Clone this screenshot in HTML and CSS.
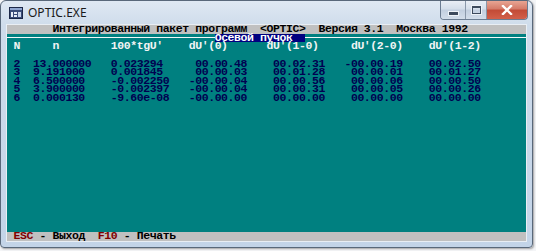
FILE: index.html
```html
<!DOCTYPE html>
<html lang="ru">
<head>
<meta charset="utf-8">
<title>OPTIC.EXE</title>
<link rel="stylesheet" href="styles.css">
</head>
<body>
<div class="win">
  <div class="titlebar">
    <svg class="icon" width="14" height="12" viewBox="0 0 14 12">
      <rect x="0.5" y="0.5" width="13" height="11" fill="#3a4c78" stroke="#1c2848"/>
      <rect x="1" y="1" width="12" height="2" fill="#8fa6d0"/>
      <rect x="2" y="5" width="2" height="5" fill="#e8eef8"/>
      <rect x="5" y="5" width="3" height="2" fill="#e8eef8"/>
      <rect x="5" y="8" width="3" height="2" fill="#e8eef8"/>
      <rect x="9" y="5" width="3" height="5" fill="#c8d4ea"/>
    </svg>
    <span class="title">OPTIC.EXE</span>
    <div class="caps">
      <div class="cap min"><span class="glyph-min"></span></div>
      <div class="cap max"><span class="glyph-max"></span></div>
      <div class="cap close">
        <svg width="12" height="10" viewBox="0 0 12 10"><path d="M2 1 L10 9 M10 1 L2 9" stroke="#fff" stroke-width="2.4" stroke-linecap="square"/></svg>
      </div>
    </div>
  </div>
  <div class="client">
    <div class="row bar">       Интегрированный пакет программ  &lt;OPTIC&gt;  Версия 3.1  Москва 1992</div>
    <div class="row rule">                                <span class="label">Осевой пучок  </span></div>
    <div class="row head"> N     n        100*tgU'    dU'(0)      dU'(1-0)     dU'(2-0)    dU'(1-2)</div>
    <div class="row"> </div>
    <div class="row data"> 2  13.000000   0.023294     00.00.48    00.02.31   -00.00.19    00.02.50</div>
    <div class="row data"> 3  9.191000    0.001845     00.00.03    00.01.28    00.00.01    00.01.27</div>
    <div class="row data"> 4  6.500000    -0.002250   -00.00.04    00.00.56    00.00.06    00.00.50</div>
    <div class="row data"> 5  3.900000    -0.002397   -00.00.04    00.00.31    00.00.05    00.00.26</div>
    <div class="row data"> 6  0.000130    -9.60e-08   -00.00.00    00.00.00    00.00.00    00.00.00</div>
    <div class="fill"></div>
    <div class="row bar"> <span class="key">ESC</span> - Выход  <span class="key">F10</span> - Печать</div>
  </div>
</div>
</body>
</html>
```
FILE: styles.css
```css
html, body {
  margin: 0;
  padding: 0;
  background: #f4f5f7;
  width: 536px;
  height: 251px;
  overflow: hidden;
}
.win {
  box-sizing: border-box;
  width: 533px;
  height: 248px;
  border: 1px solid #59687a;
  border-radius: 6px 6px 4px 4px;
  background: linear-gradient(to bottom, #dfe8f3 0px, #cfdceb 24px, #c3d4e8 100%);
  padding: 0 5px 6px 6px;
  display: flex;
  flex-direction: column;
  box-shadow: 1px 1px 2px rgba(0,0,0,0.35);
}
.titlebar {
  height: 24px;
  display: flex;
  align-items: flex-start;
  flex: none;
}
.icon {
  margin: 6px 0 0 2px;
  flex: none;
}
.title {
  font-family: "Noto Sans", "Open Sans", sans-serif;
  font-size: 12px;
  line-height: 14px;
  margin: 5px 0 0 5px;
  color: #1a1a1a;
}
.caps {
  margin-left: auto;
  display: flex;
  height: 18px;
  border: 1px solid #6b7c91;
  border-top: none;
  border-radius: 0 0 4px 4px;
  overflow: hidden;
  margin-right: -1px;
}
.cap {
  display: flex;
  align-items: center;
  justify-content: center;
  background: linear-gradient(to bottom, #e9eef5 0%, #d4deea 45%, #c2cfdf 50%, #d3ddea 100%);
}
.min { width: 24px; border-right: 1px solid #8a98aa; }
.max { width: 20px; border-right: 1px solid #8a98aa; }
.close {
  width: 40px;
  background: linear-gradient(to bottom, #e8a593 0%, #d47a68 45%, #c24a36 50%, #d2604a 100%);
}
.glyph-min {
  width: 9px;
  height: 3px;
  margin-top: 6px;
  background: #3d4a5c;
  border: 1px solid #eef2f7;
}
.glyph-max {
  width: 7px;
  height: 5px;
  border: 1px solid #3d4a5c;
  border-top-width: 2px;
  box-shadow: 0 0 0 1px #eef2f7;
}
.client {
  width: 519px;
  height: 216px;
  display: flex;
  flex-direction: column;
  background: #008080;
  font-family: "Liberation Mono", "DejaVu Sans Mono", monospace;
  font-weight: bold;
  font-size: 11.5px;
  letter-spacing: -0.4125px;
  outline: 1px solid #e9eef4;
}
.row {
  height: 8.64px;
  line-height: 8.64px;
  white-space: pre;
  flex: none;
}
.bar {
  background: #c0c0c0;
  color: #000;
}
.key { color: #800000; }
.rule {
  background: linear-gradient(to bottom, transparent 3px, #f4f8f8 3px, #f4f8f8 4px, transparent 4px);
}
.label {
  display: inline-block;
  height: 8.64px;
  line-height: 8.64px;
  vertical-align: top;
  background: #000080;
  color: #fff;
}
.head { color: #f0f4f4; }
.data { color: #000050; }
.fill { flex: 1; }
```
